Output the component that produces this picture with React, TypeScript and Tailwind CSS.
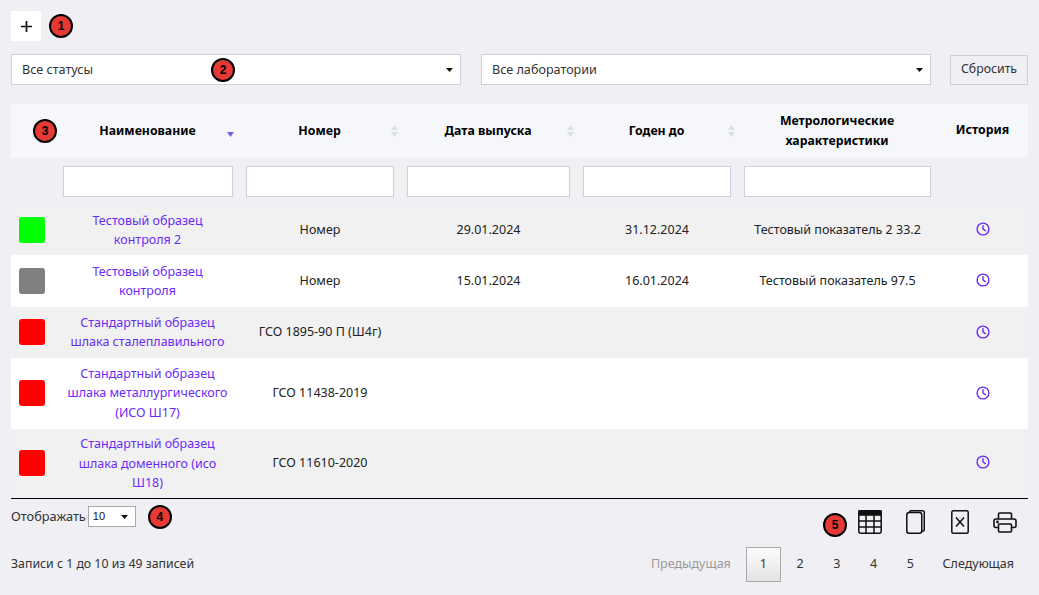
import type { ReactNode } from 'react';

type Row = {
  color: string;
  name: string[];
  code: string;
  issued: string;
  until: string;
  metrics: string;
  height: string;
  stripe: boolean;
  nudge?: boolean;
};

const rows: Row[] = [
  { color: 'bg-[#00ff00]', name: ['Тестовый образец', 'контроля 2'], code: 'Номер', issued: '29.01.2024', until: '31.12.2024', metrics: 'Тестовый показатель 2 33.2', height: 'h-[50px]', stripe: true },
  { color: 'bg-[#808080]', name: ['Тестовый образец', 'контроля'], code: 'Номер', issued: '15.01.2024', until: '16.01.2024', metrics: 'Тестовый показатель 97.5', height: 'h-[52px]', stripe: false },
  { color: 'bg-[#ff0000]', name: ['Стандартный образец', 'шлака сталеплавильного'], code: 'ГСО 1895-90 П (Ш4г)', issued: '', until: '', metrics: '', height: 'h-[51px]', stripe: true, nudge: true },
  { color: 'bg-[#ff0000]', name: ['Стандартный образец', 'шлака металлургического', '(ИСО Ш17)'], code: 'ГСО 11438-2019', issued: '', until: '', metrics: '', height: 'h-[71px]', stripe: false, nudge: true },
  { color: 'bg-[#ff0000]', name: ['Стандартный образец', 'шлака доменного (исо', 'Ш18)'], code: 'ГСО 11610-2020', issued: '', until: '', metrics: '', height: 'h-[69px]', stripe: true },
];

function Badge({ children, className = '' }: { children: ReactNode; className?: string }) {
  return (
    <span
      className={`flex h-[24px] w-[24px] shrink-0 items-center justify-center rounded-full border-2 border-black bg-[#e53935] text-[12px] font-bold text-black font-['Liberation_Sans',sans-serif] ${className}`}
    >
      {children}
    </span>
  );
}

function Caret() {
  return (
    <svg width="7" height="4" viewBox="0 0 7 4" className="shrink-0">
      <path d="M0 0h7L3.500 4z" fill="#111" />
    </svg>
  );
}

function SortIcon({ active }: { active?: boolean }) {
  return (
    <svg
      width="7"
      height="12"
      viewBox="0 0 7 12"
      className={`absolute top-1/2 -translate-y-1/2 ${active ? 'right-[5px]' : 'right-[2px]'}`}
    >
      {!active && <path d="M3.500 0L7 5H0z" fill="#dcdfe6" />}
      <path d="M0 7h7L3.500 12z" fill={active ? '#7c5ce6' : '#dcdfe6'} />
    </svg>
  );
}

function HeadCell({ children, active }: { children: ReactNode; active?: boolean }) {
  return (
    <th className="relative px-[6px] pb-[1px] text-center align-middle text-[12.3px] leading-[20px] font-bold text-black">
      {children}
      <SortIcon active={active} />
    </th>
  );
}

function ClockIcon() {
  return (
    <svg width="14" height="14" viewBox="0 0 14 14" fill="none" stroke="#6a2cf5" strokeWidth="1.4" strokeLinecap="round" strokeLinejoin="round" className="mx-auto mb-[2px] block">
      <circle cx="7" cy="7" r="5.900" />
      <path d="M7 3.600V7l2.300 1.600" />
    </svg>
  );
}

function FilterInput() {
  return <input type="text" className="block h-[31px] w-full border border-[#ccd0da] bg-white" />;
}

function SelectBox({ label, width }: { label: string; width: string }) {
  return (
    <div className={`flex h-[31px] items-center justify-between border border-[#ccd0da] bg-white pr-[7px] pl-[10px] text-[12.6px] text-[#333] ${width}`}>
      <span className="pt-[1px]">{label}</span>
      <Caret />
    </div>
  );
}

function PageButton({ children, current }: { children: ReactNode; current?: boolean }) {
  return (
    <span
      className={
        current
          ? 'mr-[1px] flex h-[35px] w-[35px] items-center justify-center border border-[#a9a9a9] bg-gradient-to-b from-[#fdfdfd] to-[#e4e4e4] text-[#333]'
          : 'flex h-[35px] w-[36.7px] items-center justify-center text-[#333]'
      }
    >
      {children}
    </span>
  );
}

export default function App() {
  return (
    <div className="relative h-[595px] w-[1039px] overflow-hidden bg-[#efeff4] px-[11px] pt-[11px] font-['Noto_Sans',sans-serif] text-[12.5px] text-[#222]">
      <div className="flex items-center gap-[8px]">
        <button type="button" className="flex h-[30px] w-[30px] items-center justify-center bg-white">
          <svg width="11" height="11" viewBox="0 0 11 11" stroke="#111" strokeWidth="1.7">
            <path d="M5.500 0v11M0 5.500h11" />
          </svg>
        </button>
        <Badge>1</Badge>
      </div>

      <div className="relative mt-[13px] flex items-center">
        <SelectBox label="Все статусы" width="w-[450px]" />
        <SelectBox label="Все лаборатории" width="ml-[20px] w-[450px]" />
        <button type="button" className="ml-[19px] h-[30px] w-[78px] border border-[#ccd0da] text-[12.3px] text-[#333]">
          Сбросить
        </button>
        <Badge className="absolute top-[4px] left-[200px]">2</Badge>
      </div>

      <table className="mt-[19px] w-[1017px] table-fixed border-collapse">
        <colgroup>
          <col className="w-[45px]" />
          <col className="w-[183px]" />
          <col className="w-[161px]" />
          <col className="w-[176px]" />
          <col className="w-[161px]" />
          <col className="w-[200px]" />
          <col className="w-[91px]" />
        </colgroup>
        <thead>
          <tr className="h-[54px] bg-[#f6f7fa]">
            <th className="pl-[22px] align-middle">
              <Badge>3</Badge>
            </th>
            <HeadCell active>Наименование</HeadCell>
            <HeadCell>Номер</HeadCell>
            <HeadCell>Дата выпуска</HeadCell>
            <HeadCell>Годен до</HeadCell>
            <th className="px-[6px] pb-[1px] text-center text-[12.3px] leading-[20px] font-bold text-black">
              Метрологические
              <br />
              характеристики
            </th>
            <th className="pb-[1px] text-center text-[12.3px] font-bold text-black">История</th>
          </tr>
          <tr className="h-[47px]">
            <th />
            <th className="pr-[6px] pl-[7px]"><FilterInput /></th>
            <th className="pr-[6px] pl-[7px]"><FilterInput /></th>
            <th className="pr-[6px] pl-[7px]"><FilterInput /></th>
            <th className="pr-[6px] pl-[7px]"><FilterInput /></th>
            <th className="pr-[6px] pl-[7px]"><FilterInput /></th>
            <th />
          </tr>
        </thead>
        <tbody className="border-b border-black">
          {rows.map((row) => (
            <tr key={row.name.join(' ')} className={`${row.height} ${row.stripe ? 'bg-[#f1f1f2]' : 'bg-white'}`}>
              <td className="pl-[8px] align-middle">
                <span className={`mb-[1px] block h-[26px] w-[26px] rounded-[3px] ${row.color}`} />
              </td>
              <td className={`text-center leading-[19.5px] text-[#6a2cf5] ${row.nudge ? 'pb-[1px]' : ''}`}>
                {row.name.map((line) => (
                  <div key={line}>{line}</div>
                ))}
              </td>
              <td className="pl-[1px] text-center">{row.code}</td>
              <td className="pl-[1px] text-center">{row.issued}</td>
              <td className="pl-[1px] text-center">{row.until}</td>
              <td className="pl-[1px] text-center">{row.metrics}</td>
              <td><ClockIcon /></td>
            </tr>
          ))}
        </tbody>
      </table>

      <div className="flex h-[48px] items-start justify-between">
        <div className="flex items-center pt-[6px]">
          <span className="text-[12.8px] text-[#333]">Отображать</span>
          <div className="ml-[2px] flex h-[21px] w-[48px] items-center justify-between border border-[#a9a9a9] bg-white pr-[7px] pl-[4px] text-[11px] text-[#111] font-['Liberation_Sans',sans-serif]">
            <span>10</span>
            <Caret />
          </div>
          <Badge className="ml-[12px]">4</Badge>
        </div>
        <div className="flex items-start pt-[11px] pr-[11px]">
          <Badge className="mt-[3px] mr-[11px]">5</Badge>
          <svg width="24" height="24" viewBox="0 0 24 24" fill="none" stroke="#111" strokeWidth="1.5">
            <rect x="0.800" y="0.800" width="22.400" height="22.400" rx="2" />
            <path d="M1 1h22v4H1z" fill="#111" />
            <path d="M1 11h22M1 17h22M8 5v18M16 5v18" />
          </svg>
          <svg width="19" height="24" viewBox="0 0 19 24" fill="none" stroke="#111" strokeWidth="1.5" className="ml-[24px]">
            <rect x="0.800" y="2.500" width="15" height="20.700" rx="2.500" />
            <path d="M3.500 2.500V2.300A1.500 1.500 0 0 1 5 0.800h11.500a1.800 1.800 0 0 1 1.800 1.800v16.900a1.800 1.800 0 0 1-1.800 1.700H15.800" />
          </svg>
          <svg width="18" height="24" viewBox="0 0 18 24" fill="none" stroke="#111" strokeWidth="1.5" className="ml-[26px]">
            <rect x="0.800" y="0.800" width="16.400" height="22.400" rx="1.500" />
            <path d="M5 7.500l8 9M13 7.500l-8 9" />
          </svg>
          <svg width="24" height="21" viewBox="0 0 24 21" fill="none" stroke="#111" strokeWidth="1.6" strokeLinejoin="round" className="mt-[2px] ml-[24px]">
            <path d="M5.500 7V2.200A1.200 1.200 0 0 1 6.700 1h10.600a1.200 1.200 0 0 1 1.200 1.200V7" />
            <path d="M5.500 15.500H3a2 2 0 0 1-2-2V9a2 2 0 0 1 2-2h18a2 2 0 0 1 2 2v4.500a2 2 0 0 1-2 2h-2.500" />
            <rect x="5.500" y="12" width="13" height="8" rx="1" />
            <circle cx="4.500" cy="10" r="0.600" fill="#111" />
          </svg>
        </div>
      </div>

      <div className="flex items-center justify-between pr-[14px]">
        <span className="text-[12.3px] text-[#333]">Записи с 1 до 10 из 49 записей</span>
        <div className="flex items-center">
          <span className="mr-[15px] text-[#9a9a9a]">Предыдущая</span>
          <PageButton current>1</PageButton>
          <PageButton>2</PageButton>
          <PageButton>3</PageButton>
          <PageButton>4</PageButton>
          <PageButton>5</PageButton>
          <span className="ml-[14px] text-[#333]">Следующая</span>
        </div>
      </div>
    </div>
  );
}
